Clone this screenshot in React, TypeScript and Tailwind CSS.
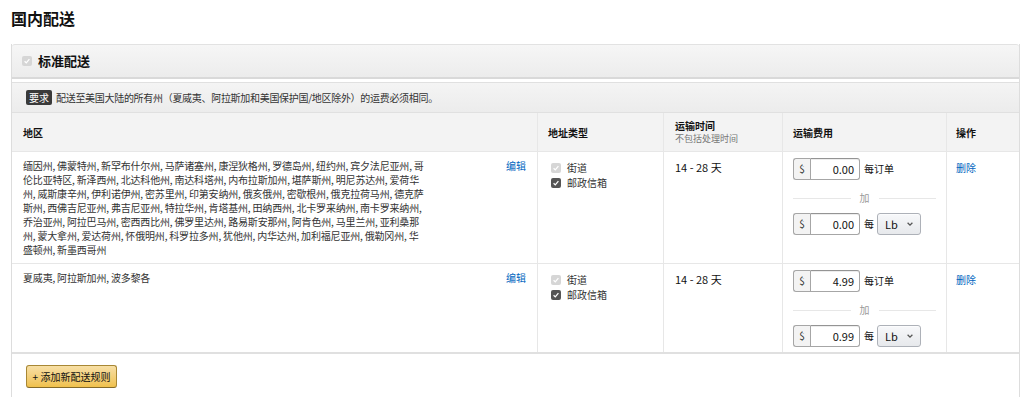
import React from "react";

type CheckProps = { dim?: boolean };

const Check = ({ dim }: CheckProps) => (
  <span
    className={
      dim
        ? "inline-flex w-[10px] h-[10px] shrink-0 items-center justify-center rounded-[2px] bg-[#d6d6d6]"
        : "inline-flex w-[10px] h-[10px] shrink-0 items-center justify-center rounded-[2px] bg-[#555]"
    }
  >
    <svg viewBox="0 0 10 10" className="w-[8px] h-[8px]">
      <path d="M2 5.3 L4.1 7.3 L8 2.7" stroke="white" strokeWidth="1.6" fill="none" />
    </svg>
  </span>
);

const Money = ({ value }: { value: string }) => (
  <span className="flex h-[22px]">
    <span className="flex w-[17px] items-center justify-center rounded-l-[3px] border border-r-0 border-[#a6a6a6] bg-[#f3f3f3] text-[10px] text-[#333]">
      $
    </span>
    <span className="flex w-[50px] items-center justify-end rounded-r-[3px] border border-[#a6a6a6] border-t-[#949494] pr-[5px] text-[11px] text-[#111] shadow-[inset_0_1px_0_rgba(0,0,0,0.07)]">
      {value}
    </span>
  </span>
);

type Rule = {
  regions: string[];
  first: string;
  extra: string;
};

// line breaks kept as they appear on the live page
const rules: Rule[] = [
  {
    regions: [
      "缅因州, 佛蒙特州, 新罕布什尔州, 马萨诸塞州, 康涅狄格州, 罗德岛州, 纽约州, 宾夕法尼亚州, 哥",
      "伦比亚特区, 新泽西州, 北达科他州, 南达科塔州, 内布拉斯加州, 堪萨斯州, 明尼苏达州, 爱荷华",
      "州, 威斯康辛州, 伊利诺伊州, 密苏里州, 印第安纳州, 俄亥俄州, 密歇根州, 俄克拉荷马州, 德克萨",
      "斯州, 西佛吉尼亚州, 弗吉尼亚州, 特拉华州, 肯塔基州, 田纳西州, 北卡罗来纳州, 南卡罗来纳州,",
      "乔治亚州, 阿拉巴马州, 密西西比州, 佛罗里达州, 路易斯安那州, 阿肯色州, 马里兰州, 亚利桑那",
      "州, 蒙大拿州, 爱达荷州, 怀俄明州, 科罗拉多州, 犹他州, 内华达州, 加利福尼亚州, 俄勒冈州, 华",
      "盛顿州, 新墨西哥州",
    ],
    first: "0.00",
    extra: "0.00",
  },
  {
    regions: ["夏威夷, 阿拉斯加州, 波多黎各"],
    first: "4.99",
    extra: "0.99",
  },
];

const cols = "grid grid-cols-[526px_126px_119px_164px_72px]";

export default function App() {
  return (
    <div className="h-[397px] w-[1024px] overflow-hidden bg-white pl-[11px] pt-[7px] font-['Noto_Sans_CJK_SC',sans-serif] text-[#333]">
      <h1 className="text-[16px] font-bold leading-[22px] text-[#111]">国内配送</h1>

      <div className="mt-[15px] h-[400px] w-[1009px] border-x border-[#ddd]">
        <div className="flex h-[35px] items-center gap-[6px] rounded-t-[3px] border-t border-b-2 border-[#e2e2e2] border-b-[#d9d9d9] bg-gradient-to-b from-[#f6f6f6] to-[#ececec] pl-[10px]">
          <Check dim />
          <span className="text-[13px] font-bold leading-[18px] text-[#111]">标准配送</span>
        </div>

        <div className="mt-[3px] flex h-[31px] items-center gap-[4px] border-y border-[#e0e0e0] bg-gradient-to-b from-[#f4f4f4] to-[#ececec] pl-[14px]">
          <span className="rounded-[2px] bg-[#3a3a3a] px-[3px] text-[10px] leading-[15px] text-white">要求</span>
          <span className="text-[10px] leading-[14px] tracking-[-0.3px] text-[#333]">
            配送至美国大陆的所有州（夏威夷、阿拉斯加和美国保护国/地区除外）的运费必须相同。
          </span>
        </div>

        <div className={`${cols} h-[39px] border-b border-[#e7e7e7] bg-[#f3f3f3] text-[10px] font-bold leading-[13px] text-[#111]`}>
          <div className="flex items-center border-r border-[#e7e7e7] pl-[11px]">地区</div>
          <div className="flex items-center border-r border-[#e7e7e7] pl-[10px]">地址类型</div>
          <div className="flex flex-col justify-center border-r border-[#e7e7e7] pl-[11px]">
            <span>运输时间</span>
            <span className="text-[9px] font-normal text-[#767676]">不包括处理时间</span>
          </div>
          <div className="flex items-center border-r border-[#e7e7e7] pl-[10px]">运输费用</div>
          <div className="flex items-center pl-[9px]">操作</div>
        </div>

        {rules.map((rule, i) => (
          <div
            key={i}
            className={
              i === rules.length - 1
                ? `${cols} border-b-2 border-[#e0e0e0] text-[10px] leading-[14px]`
                : `${cols} border-b border-[#e7e7e7] text-[10px] leading-[14px]`
            }
          >
            <div className="flex justify-between border-r border-[#e7e7e7] pb-[6px] pl-[11px] pr-[11px] pt-[7px]">
              <p className="w-[404px] tracking-[-0.18px]">
                {rule.regions.map((line, j) => (
                  <span key={j} className="block whitespace-nowrap">
                    {line}
                  </span>
                ))}
              </p>
              <a className="text-[#0066c0]" href="#">编辑</a>
            </div>
            <div className="flex flex-col border-r border-[#e7e7e7] pl-[13px] pt-[8px]">
              <label className="flex h-[15px] items-center gap-[6px]">
                <Check dim />
                <span>街道</span>
              </label>
              <label className="flex h-[15px] items-center gap-[6px]">
                <Check />
                <span>邮政信箱</span>
              </label>
            </div>
            <div className="border-r border-[#e7e7e7] pl-[11px] pt-[7px] text-[11px] leading-[16px] text-[#111]">
              14 - 28 天
            </div>
            <div className="flex flex-col border-r border-[#e7e7e7] pb-[5px] pl-[10px] pr-[10px] pt-[6px]">
              <div className="flex items-center gap-[4px]">
                <Money value={rule.first} />
                <span className="text-[#111]">每订单</span>
              </div>
              <div className="mb-[8px] mt-[11px] flex h-[14px] items-center">
                <span className="h-px flex-1 bg-[#e7e7e7]" />
                <span className="px-[9px] text-[#999]">加</span>
                <span className="h-px flex-1 bg-[#e7e7e7]" />
              </div>
              <div className="flex items-center">
                <Money value={rule.extra} />
                <span className="ml-[4px] text-[#111]">每</span>
                <span className="ml-[3px] flex h-[22px] w-[44px] items-center justify-between rounded-[3px] border border-[#adb1b8] bg-gradient-to-b from-[#f7f8fa] to-[#e7e9ec] pl-[7px] pr-[6px] text-[11px] text-[#111] shadow-[0_1px_0_rgba(255,255,255,0.6)_inset]">
                  Lb
                  <svg viewBox="0 0 10 10" className="h-[8px] w-[8px]">
                    <path d="M2 3.5 L5 6.5 L8 3.5" stroke="#555" strokeWidth="1.6" fill="none" />
                  </svg>
                </span>
              </div>
            </div>
            <div className="pl-[9px] pt-[9px]">
              <a className="text-[#0066c0]" href="#">删除</a>
            </div>
          </div>
        ))}

        <div className="flex pl-[14px] pt-[11px]">
          <button
            type="button"
            className="h-[23px] w-[91px] rounded-[3px] border border-[#a88734] border-b-[#846a29] bg-gradient-to-b from-[#f7dfa5] to-[#f0c14b] text-[10px] leading-[14px] text-[#111]"
          >
            + 添加新配送规则
          </button>
        </div>
      </div>
    </div>
  );
}
